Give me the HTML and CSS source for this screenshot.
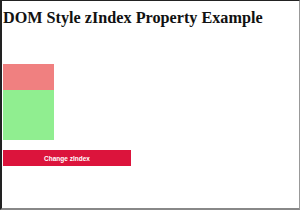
FILE: index.html
```html
<!DOCTYPE html>
<html lang="en">
  <head>
    <meta charset="UTF-8" />
    <title>DOM Style zIndex Property</title>
    <link rel="stylesheet" href="styles.css">
  </head>
  <body>
    <div class="frame">
      <h1>DOM Style zIndex Property Example</h1>
      <!-- Boxes -->
      <div class="stack">
        <div id="box1" class="box red"></div>
        <div id="box2" class="box green"></div>
      </div>
      <button id="btnChange">Change zIndex</button>
    </div>
  </body>
</html>
```

FILE: styles.css
```css
body {
  margin: 0;
  background: #fff;
}

.frame {
  height: 210px;
  box-sizing: border-box;
  border-top: 1px solid #222;
  border-left: 2px solid #222;
  border-right: 1px solid #999;
  border-bottom: 2px solid #888;
  padding: 0 1px;
  font-family: "Liberation Serif", serif;
}

h1 {
  font-size: 16.2px;
  line-height: 19px;
  margin: 8px 0 0;
  color: #111;
}

.stack {
  margin-top: 36px;
  width: 51px;
}

.box {
  width: 51px;
}

.red {
  height: 26px;
  background-color: lightcoral;
}

.green {
  height: 50px;
  background-color: lightgreen;
}

button {
  display: block;
  width: 128px;
  height: 16px;
  margin-top: 10px;
  padding: 0;
  border: none;
  background-color: crimson;
  color: #fff;
  font-family: "Liberation Sans", Arial, sans-serif;
  font-size: 6.5px;
  font-weight: bold;
}
```
